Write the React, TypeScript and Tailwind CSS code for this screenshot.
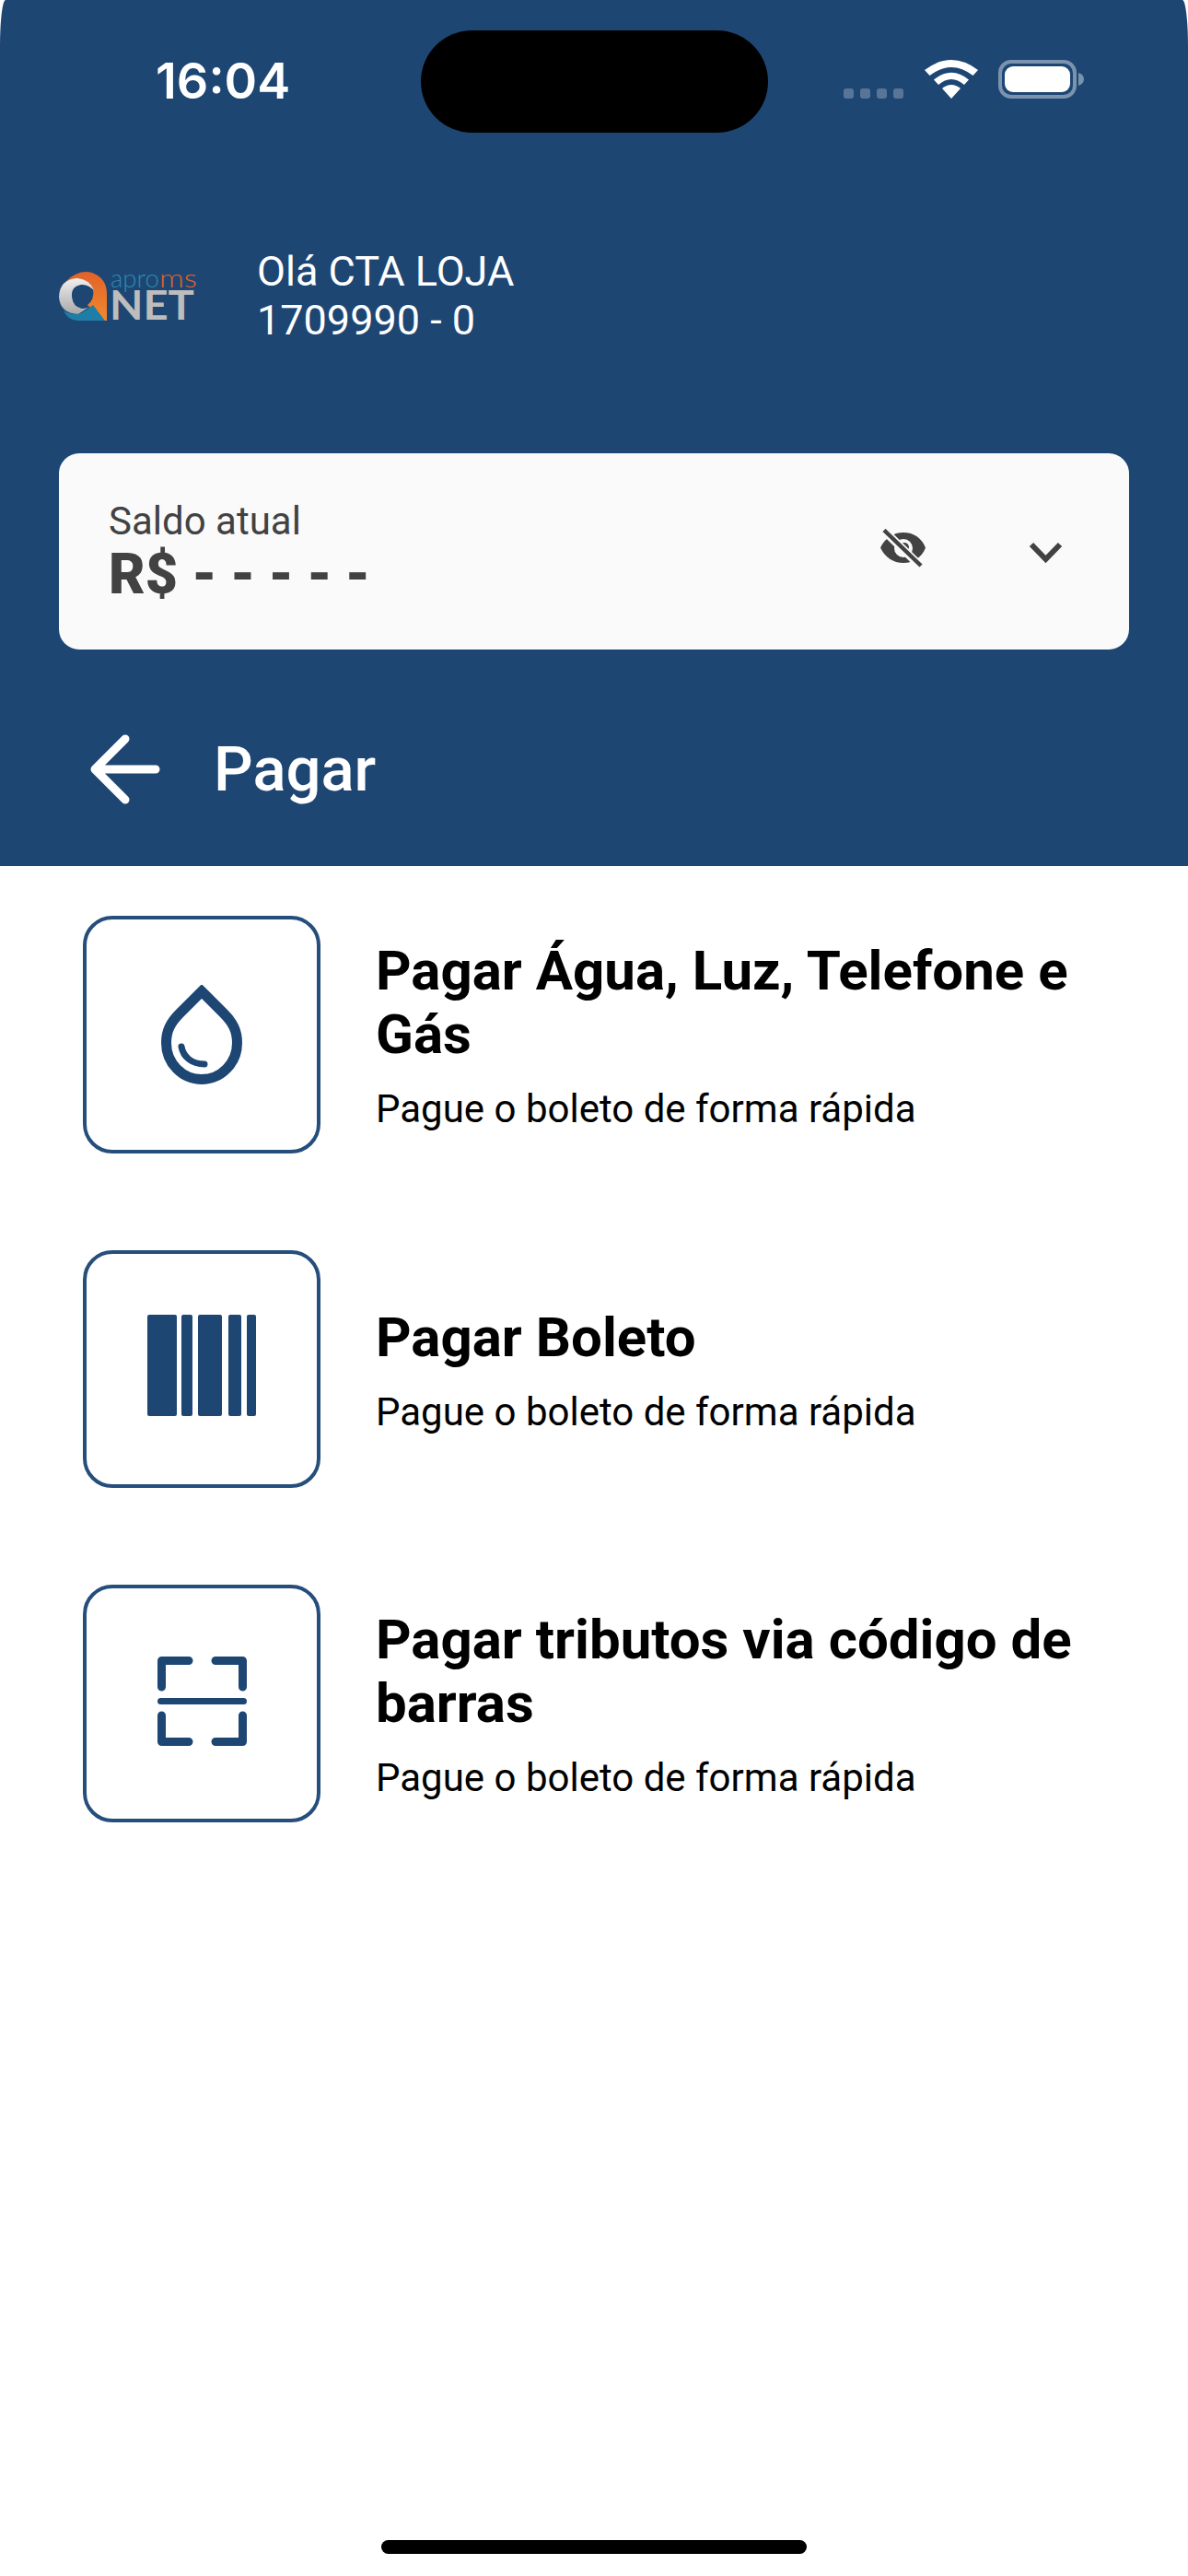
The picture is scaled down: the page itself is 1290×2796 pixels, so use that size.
const navy = "#1e4673";

function Wifi() {
  return (
    <svg width="58" height="42" viewBox="0 0 58 42" className="block">
      <path fill="#fff" d="M29 42 L19 31 Q29 23 39 31 Z" />
      <path fill="#fff" d="M15 27 L10 21.5 Q29 6 48 21.5 L43 27 Q29 15 15 27 Z" />
      <path fill="#fff" d="M5.5 17 L0 11 Q29 -11 58 11 L52.5 17 Q29 -1 5.5 17 Z" />
    </svg>
  );
}

function Battery() {
  return (
    <div className="flex items-center gap-[2px]">
      <div className="w-[85px] h-[42px] rounded-[14px] border-[4px] border-[#7a93ae] p-[3px]">
        <div className="w-full h-full rounded-[9px] bg-white" />
      </div>
      <svg width="6" height="14" viewBox="0 0 6 14" className="block">
        <path fill="#7a93ae" d="M0 0 Q6 2 6 7 Q6 12 0 14 Z" />
      </svg>
    </div>
  );
}

function StatusBar() {
  return (
    <div className="relative h-[144px]">
      <div className="absolute left-[169px] top-[58px] text-[54px] leading-[60px] font-semibold text-white font-['Inter',sans-serif]">
        16:04
      </div>
      <div className="absolute left-[457px] top-[33px] w-[377px] h-[111px] rounded-full bg-black" />
      <div className="absolute left-[916px] top-[65px] flex items-end h-[42px]">
        <div className="flex gap-[7px] mr-[23px]">
          <div className="w-[11px] h-[11px] rounded-[3px] bg-[#587598]" />
          <div className="w-[11px] h-[11px] rounded-[3px] bg-[#587598]" />
          <div className="w-[11px] h-[11px] rounded-[3px] bg-[#587598]" />
          <div className="w-[11px] h-[11px] rounded-[3px] bg-[#587598]" />
        </div>
        <div className="mr-[22px]">
          <Wifi />
        </div>
        <Battery />
      </div>
    </div>
  );
}

function Logo() {
  return (
    <svg width="156" height="80" viewBox="0 -14 156 80" className="block shrink-0">
      <defs>
        <linearGradient id="ora" x1="0" y1="0" x2="0" y2="1">
          <stop offset="0" stopColor="#e2622a" />
          <stop offset="1" stopColor="#f08a2c" />
        </linearGradient>
        <linearGradient id="gry" x1="0" y1="0" x2="0" y2="1">
          <stop offset="0" stopColor="#efefef" />
          <stop offset="1" stopColor="#a9a9a9" />
        </linearGradient>
      </defs>
      <path fill="url(#ora)" d="M8 10 Q22 -3 36 1 Q52 7 52 24 L52 53 L49 53 L31 36 Q39 30 37 19 Q31 5 8 10 Z" />
      <path fill="url(#gry)" d="M0 27 Q1 8 20 7 Q33 8 38 20 Q31 13 24 14 Q13 16 14 27 Q15 38 25 40 Q30 40 33 38 L21 46 Q1 45 0 27 Z" />
      <path fill="#1f7ea8" d="M5 42 Q14 48 24 45 Q31 41 37 36 L50 53 L20 53 Q9 52 5 42 Z" />
      <text x="56" y="17" fontFamily="Lato, sans-serif" fontSize="27" fontWeight="300" textLength="53" lengthAdjust="spacingAndGlyphs" fill="#2b89ad">apro</text>
      <text x="109" y="17" fontFamily="Lato, sans-serif" fontSize="27" fontWeight="300" textLength="41" lengthAdjust="spacingAndGlyphs" fill="#e2622a">ms</text>
      <text x="55" y="52" fontFamily="Lato, sans-serif" fontSize="43" fontWeight="700" textLength="92" lengthAdjust="spacingAndGlyphs" fill="#bdbdbd">NET</text>
    </svg>
  );
}

function EyeOff() {
  return (
    <svg width="50" height="42" viewBox="0 0 50 42" className="block">
      <path fill="#424242" fillRule="evenodd" d="M0 20.5 C5 10 14 4 25 4 C36 4 45 10 49 20.5 C45 31 36 37 25 37 C14 37 5 31 0 20.5 Z M25 11 A10 10 0 1 0 25 31 A10 10 0 1 0 25 11 Z" />
      <circle cx="26" cy="20" r="5" fill="#424242" />
      <path d="M4 2 L43 40" stroke="#fafafa" strokeWidth="9" />
      <path d="M4 1.5 L44 40" stroke="#424242" strokeWidth="4.5" />
    </svg>
  );
}

function Drop() {
  return (
    <svg width="88" height="108" viewBox="0 0 88 108" fill="none" className="block">
      <path stroke={navy} strokeWidth="11" strokeLinejoin="miter" d="M44 7 L68 31 C78 41 82.5 50 82.5 63 C82.5 85 65 102.5 44 102.5 C23 102.5 5.500 85 5.500 63 C5.500 50 10 41 20 31 Z" />
      <path stroke={navy} strokeWidth="7" strokeLinecap="round" d="M22 67 C24 78 33 86 47 86" />
    </svg>
  );
}

function Barcode() {
  return (
    <svg width="118" height="110" viewBox="0 0 118 110" className="block -mt-[8px]">
      <rect x="0" y="0" width="32" height="110" rx="2" fill={navy} />
      <rect x="37" y="0" width="12" height="110" rx="2" fill={navy} />
      <rect x="55" y="0" width="26" height="110" rx="2" fill={navy} />
      <rect x="88" y="0" width="14" height="110" rx="2" fill={navy} />
      <rect x="108" y="0" width="10" height="110" rx="2" fill={navy} />
    </svg>
  );
}

function Scan() {
  return (
    <svg width="97" height="97" viewBox="0 0 97 97" fill="none" className="block -mt-[6px]">
      <g stroke={navy} strokeWidth="9" strokeLinecap="round" strokeLinejoin="round">
        <path d="M4.500 33 L4.500 4.500 L34 4.500" />
        <path d="M63 4.500 L92.500 4.500 L92.500 33" />
        <path d="M4.500 64 L4.500 92.500 L34 92.500" />
        <path d="M63 92.500 L92.500 92.500 L92.500 64" />
      </g>
      <path d="M3.500 48.500 L93.500 48.500" stroke={navy} strokeWidth="7" strokeLinecap="round" />
    </svg>
  );
}

function Row({ icon, title, sub }: { icon: React.ReactNode; title: React.ReactNode; sub: string }) {
  return (
    <div className="flex items-center gap-[60px]">
      <div className="w-[258px] h-[258px] shrink-0 rounded-[32px] border-[4px] border-[#264e7b] flex items-center justify-center">
        {icon}
      </div>
      <div className="flex flex-col pt-[2px] font-['Roboto',sans-serif]">
        <div className="text-[60px] leading-[69px] font-bold text-black">{title}</div>
        <div className="mt-[22px] text-[42px] leading-[50px] text-black">{sub}</div>
      </div>
    </div>
  );
}

export default function App() {
  return (
    <div className="relative w-[1290px] h-[2796px] bg-white overflow-hidden font-['Roboto',sans-serif]">
      <header className="h-[940px] bg-[#1e4673] rounded-tl-[6px_50px] rounded-tr-[6px_50px]">
        <StatusBar />
        <div className="mt-[124px] ml-[64px] flex items-center gap-[59px]">
          <Logo />
          <div className="text-[45px] leading-[53px] text-white">
            <div>Olá CTA LOJA</div>
            <div>1709990 - 0</div>
          </div>
        </div>
        <div className="mt-[118px] mx-[64px] h-[213px] rounded-[22px] bg-[#fafafa] flex items-center pl-[54px] text-[#424242]">
          <div className="flex-1">
            <div className="text-[42px] leading-[48px]">Saldo atual</div>
            <div className="text-[61px] leading-[66px] font-black">
              R$ <span className="[word-spacing:-1px]">- - - - -</span>
            </div>
          </div>
          <div className="mr-[111px] -mt-[8px]">
            <EyeOff />
          </div>
          <svg width="37" height="24" viewBox="0 0 37 24" fill="none" className="block mr-[72px] mt-[2px]">
            <path d="M3 3 L18.500 19 L34 3" stroke="#424242" strokeWidth="6" />
          </svg>
        </div>
        <div className="mt-[92px] ml-[98px] flex items-center gap-[58px]">
          <svg width="76" height="76" viewBox="0 0 76 76" fill="none" className="block">
            <path d="M38 5 L5 38 L38 71 M5 38 L71 38" stroke="#fff" strokeWidth="9" strokeLinecap="round" strokeLinejoin="round" />
          </svg>
          <div className="text-[67px] leading-[76px] font-medium text-white">Pagar</div>
        </div>
      </header>
      <main className="pt-[54px] pl-[90px] pr-[80px] flex flex-col gap-[105px]">
        <Row icon={<Drop />} title={<>Pagar Água, Luz, Telefone e<br />Gás</>} sub="Pague o boleto de forma rápida" />
        <Row icon={<Barcode />} title="Pagar Boleto" sub="Pague o boleto de forma rápida" />
        <Row icon={<Scan />} title={<>Pagar tributos via código de<br />barras</>} sub="Pague o boleto de forma rápida" />
      </main>
      <div className="absolute left-[414px] top-[2757px] w-[462px] h-[15px] rounded-full bg-black" />
    </div>
  );
}
